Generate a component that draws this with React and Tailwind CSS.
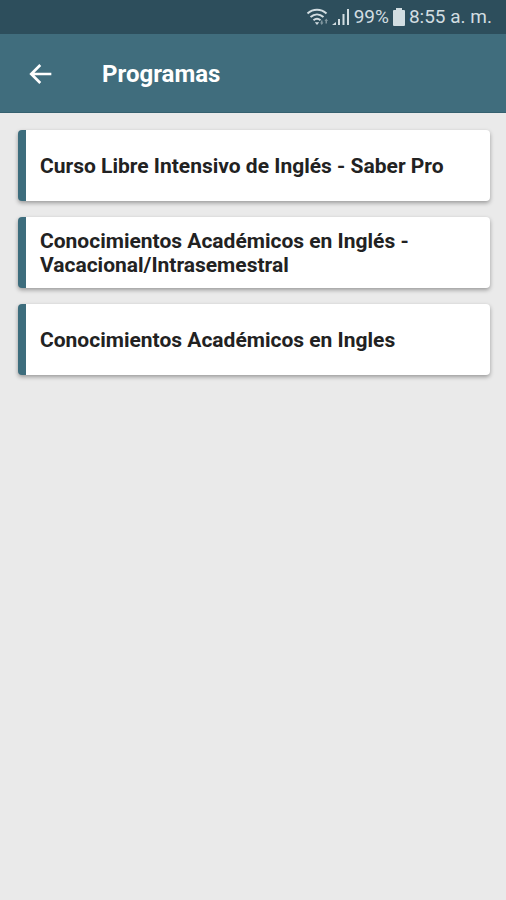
const programs = [
  'Curso Libre Intensivo de Inglés - Saber Pro',
  'Conocimientos Académicos en Inglés - Vacacional/Intrasemestral',
  'Conocimientos Académicos en Ingles',
];

function WifiIcon() {
  return (
    <svg width="24" height="20" viewBox="0 0 24 20" fill="none" stroke="currentColor" strokeWidth="2" aria-hidden="true">
      <path d="M1.500 6.500C7 1.500 15 1.500 20.500 6.500" />
      <path d="M4.500 10C8.500 6.500 13.500 6.500 17.500 10" />
      <path d="M7.500 13.200C9.800 11.200 12.200 11.200 14.500 13.200" />
      <path d="M8.800 15.200h4.400L11 18z" fill="currentColor" stroke="none" />
      <g fill="currentColor" stroke="none" opacity="0.5">
        <path d="M14 15.500h1v-2h1.500v2h1L15.700 18z" />
        <path d="M18.500 14L20.300 11.500L22 14h-1v2.500h-1.500V14z" />
      </g>
    </svg>
  );
}

function SignalIcon() {
  return (
    <svg width="18" height="18" viewBox="0 0 18 18" fill="currentColor" aria-hidden="true">
      <path d="M0 17L4 14V17z" />
      <path d="M6 11h2v6H6zM10.500 6h2v11h-2zM15 1h2v16h-2z" />
    </svg>
  );
}

function BatteryIcon() {
  return (
    <svg width="12" height="18" viewBox="0 0 12 18" fill="currentColor" aria-hidden="true">
      <path d="M3 0h6v2h2q1 0 1 1v14q0 1-1 1H1q-1 0-1-1V3q0-1 1-1h2z" />
    </svg>
  );
}

function StatusBar() {
  return (
    <div className="flex h-[34px] items-center justify-end bg-[#2d4e5c] pr-3.5 text-[19px] text-[#d2dde1]">
      <WifiIcon />
      <span className="ml-0.5"><SignalIcon /></span>
      <span className="ml-1">99%</span>
      <span className="mx-1"><BatteryIcon /></span>
      <span>8:55 a. m.</span>
    </div>
  );
}

export default function App() {
  return (
    <div className="min-h-screen bg-[#eaeaea] font-['Roboto',sans-serif]">
      <StatusBar />
      <header className="flex h-[79px] items-center border-b border-[#35606f] bg-[#406d7d] pt-0.5 text-white">
        <button type="button" aria-label="Volver" className="ml-6 flex size-8 items-center justify-center">
          <svg width="32" height="32" viewBox="0 0 24 24" fill="currentColor" aria-hidden="true">
            <path d="M20.500 11H7.830l5.090-5.090L11.500 4.500l-7.500 7.500 7.500 7.500 1.410-1.410L7.830 13H20.500v-2z" />
          </svg>
        </button>
        <h1 className="ml-[46px] text-2xl font-bold">Programas</h1>
      </header>
      <main className="pt-[17px] pr-4 pl-[18px]">
        <ul className="flex flex-col gap-4">
          {programs.map((name) => (
            <li key={name}>
              <button
                type="button"
                className="flex min-h-[71px] w-full items-center rounded border-l-8 border-[#3d6d7d] bg-white pr-4 pl-3.5 text-left text-[21px] leading-6 font-bold text-[#222222] shadow-[0_2px_4px_rgba(0,0,0,0.35)]"
              >
                {name}
              </button>
            </li>
          ))}
        </ul>
      </main>
    </div>
  );
}
